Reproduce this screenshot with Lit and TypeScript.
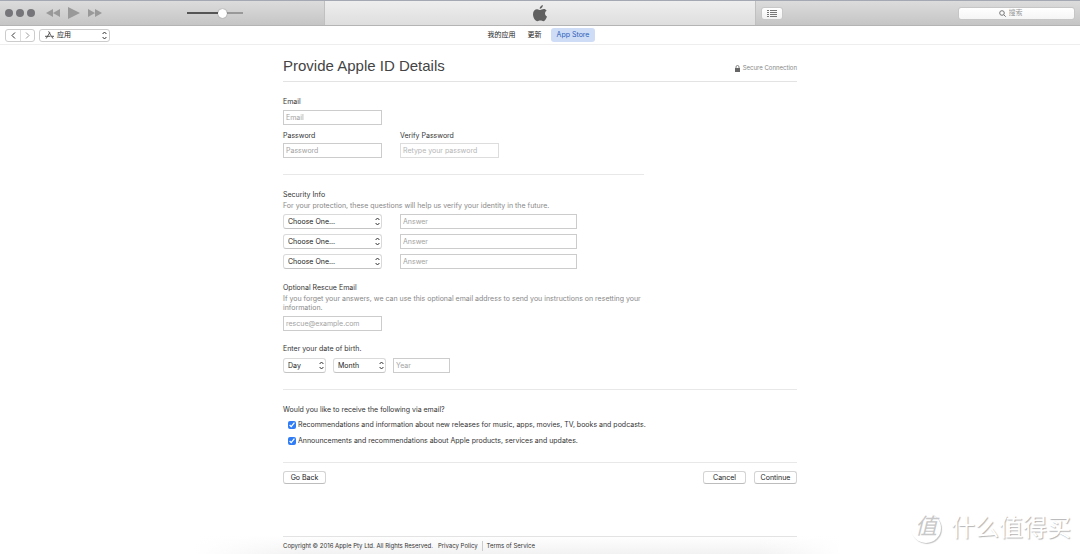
import { LitElement, html, css } from "lit";
import { customElement, property } from "lit/decorators.js";

@customElement("pop-select")
class PopSelect extends LitElement {
  @property() label = "";
  @property() text = "";

  static styles = css`
    :host { display: block; }
    .wrap { display: grid; align-items: center; }
    .control, .arrows { grid-area: 1 / 1; }
    .control {
      appearance: none; box-sizing: border-box; width: 100%; height: 15px; margin: 0;
      padding: 0 12px 0 4px; border: 1px solid #dadada; border-bottom-color: #c4c4c4; border-radius: 3px;
      background: #fff; color: #222; font: 7px/11px Inter, "Liberation Sans", sans-serif;
    }
    .arrows { justify-self: end; margin-right: 2px; width: 5px; height: 9px; pointer-events: none; }
  `;

  render() {
    return html`<div class="wrap">
      <select class="control" aria-label=${this.label}><option>${this.text}</option></select>
      <svg class="arrows" viewBox="0 0 5 9" fill="none" stroke="#333" stroke-width="1">
        <path d="M.6 3 2.5 1 4.4 3M.6 6 2.5 8 4.4 6" />
      </svg>
    </div>`;
  }
}

@customElement("app-root")
class AppRoot extends LitElement {
  static styles = css`
    :host {
      display: flex; flex-direction: column; min-height: 100vh; background: #fff; color: #333;
      font: 7px/10px Inter, "Liberation Sans", "Noto Sans CJK SC", sans-serif;
    }
    * { box-sizing: border-box; }
    button, input { font: inherit; margin: 0; }
    h1, h2, p { margin: 0; font-size: inherit; font-weight: normal; }
    svg { display: block; }

    .toolbar {
      display: grid; grid-template-columns: 1fr 40% 1fr; height: 26px;
      border-top: 1px solid #a3a8b3; border-bottom: 1px solid #b4b4b4;
      background: linear-gradient(#dcdcdc, #c5c5c5);
    }
    .left, .right { display: flex; align-items: center; }
    .left { padding-left: 5px; }
    .dots { display: flex; gap: 3px; }
    .dot { width: 8px; height: 8px; border-radius: 50%; background: #75757a; }
    .transport { display: flex; align-items: center; gap: 8px; margin-left: 11px; }
    .plain { padding: 0; border: 0; background: none; }
    .volume {
      appearance: none; width: 56px; height: 10px; margin-left: 85px;
      background: linear-gradient(90deg, #555 64%, #999 64%) center / 100% 2px no-repeat;
    }
    .volume::-webkit-slider-thumb {
      appearance: none; width: 9px; height: 9px; border-radius: 50%;
      background: #fff; box-shadow: 0 0 1px #555;
    }
    .display {
      display: grid; place-items: center; background: linear-gradient(#eeeeee, #dedede);
      border: solid #c0c0c0; border-width: 0 1px;
    }
    .right { justify-content: space-between; padding: 0 5px 0 5px; }
    .list {
      display: grid; place-items: center; width: 22px; height: 13px; padding: 0;
      border: 1px solid #c8c8c8; border-radius: 3px; background: linear-gradient(#fff, #f1f1f1);
    }
    .search {
      display: flex; align-items: center; justify-content: center; gap: 3px; width: 117px; height: 13px;
      border: 1px solid #c6c6c6; border-radius: 3px; background: linear-gradient(#fff, #f5f5f5);
    }
    .query { width: 26px; padding: 0; border: 0; outline: 0; background: none; }
    .query::placeholder { color: #999; opacity: 1; }

    .nav {
      display: grid; grid-template-columns: 1fr auto 1fr; align-items: center;
      height: 19px; padding: 0 5px; border-bottom: 1px solid #eee;
    }
    .crumbs { display: flex; gap: 4px; }
    .pair { display: flex; border: 1px solid #ccc; border-radius: 3px; height: 13px; }
    .step { display: grid; place-items: center; width: 14px; padding: 0; border: 0; background: none; }
    .step + .step { border-left: 1px solid #ddd; }
    .library {
      display: flex; align-items: center; gap: 3px; width: 71px; height: 13px; padding: 0 2px 0 5px;
      border: 1px solid #ccc; border-radius: 3px; background: #fff; color: #222;
    }
    .grow { margin-left: auto; }
    .tabs { display: flex; align-items: center; gap: 6px; }
    .tab { padding: 2px 3px; border-radius: 3px; color: #222; text-decoration: none; }
    .current { padding: 2px 6px; background: #cfdcf6; color: #2a5fb8; }

    .page { width: 100%; max-width: 514px; margin: 0 auto; }
    .head {
      display: flex; justify-content: space-between; align-items: center;
      padding: 11px 0 5px; border-bottom: 1px solid #e3e3e3;
    }
    .title { font-family: "Liberation Sans", sans-serif; font-size: 15px; line-height: 20px; color: #444; }
    .secure { display: flex; align-items: center; gap: 3px; margin-top: 4px; color: #888; font-size: 6px; }
    .narrow { max-width: 361px; }
    .section { padding: 15px 0 16px; border-bottom: 1px solid #e8e8e8; }
    .flat { padding-bottom: 0; border: 0; }
    .near { padding-top: 13px; }
    .label { display: block; }
    .hint { margin-top: 1px; color: #888; line-height: 9px; }
    .field {
      display: block; width: 100%; height: 15px; padding: 0 2px; border: 1px solid #ccc;
      border-radius: 0; background: #fff; color: #333;
    }
    .field::placeholder { color: #a2a2a2; opacity: 1; }
    .faint { border-color: #ddd; }
    .faint::placeholder { color: #b5b5b5; }
    .cols { display: grid; grid-template-columns: 99px 99px; gap: 18px; }
    .stack { display: grid; gap: 2px; }
    .email { width: 99px; gap: 3px; margin-bottom: 6px; }
    .answers { display: grid; grid-template-columns: 99px 177px; gap: 5px 18px; margin-top: 4px; }
    .block { margin-top: 14px; }
    .rescue { width: 99px; margin-top: 4px; }
    .birth { display: grid; grid-template-columns: 43px 53px 57px; gap: 7px; margin-top: 4px; }
    .checks { display: grid; gap: 6px; margin-top: 5px; padding-left: 5px; }
    .check { display: flex; align-items: center; gap: 2px; }
    .box { width: 8px; height: 8px; accent-color: #2f7cf6; }
    .actions { display: flex; gap: 8px; padding-top: 8px; }
    .push {
      width: 43px; height: 13px; padding: 0; border: 1px solid #d4d4d4; border-bottom-color: #bdbdbd;
      border-radius: 3px; background: #fff; color: #222; line-height: 10px;
    }

    .footer {
      margin-top: auto;
      background: linear-gradient(90deg, #fff 18%, transparent 28%, transparent 70%, #fff 78%),
        linear-gradient(#fff, #f2f2f2);
    }
    .legal { display: flex; padding: 4px 0 3px; border-top: 1px solid #e3e3e3; font-size: 6px; }
    .link { color: #333; text-decoration: none; }
    .privacy { margin-left: 5px; padding-right: 4px; border-right: 1px solid #ccc; }
    .terms { padding-left: 4px; }

    .mark {
      position: absolute; right: 9px; bottom: 10px; display: flex; align-items: center; gap: 10px;
      color: #fff; font-size: 24px; line-height: 32px; text-shadow: 1px 1px 1px #b4b4b4;
    }
    .seal {
      width: 30px; height: 30px; border-radius: 50%; line-height: 27px; text-align: center;
      color: #c8c8c8; text-shadow: none; font-style: italic; font-size: 22px;
      box-shadow: 1px 1px 1px #c4c4c4;
    }
  `;

  render() {
    return html`
      <header class="toolbar">
        <div class="left">
          <div class="dots"><span class="dot"></span><span class="dot"></span><span class="dot"></span></div>
          <div class="transport">
            <button class="plain" aria-label="Previous"><svg width="14" height="8" fill="#999"><path d="M7 0v8L0 4zM14 0v8L7 4z" /></svg></button>
            <button class="plain" aria-label="Play"><svg width="12" height="12" fill="#999"><path d="M0 0 12 6 0 12z" /></svg></button>
            <button class="plain" aria-label="Next"><svg width="14" height="8" fill="#999"><path d="M0 0v8l7-4zM7 0v8l7-4z" /></svg></button>
          </div>
          <input class="volume" type="range" aria-label="Volume" value="65" />
        </div>
        <div class="display">
          <svg width="14" height="17" viewBox="0 0 14 17" fill="#606060">
            <path d="M9.9 0c.1 1.800-1.300 3.700-3.200 3.800C6.500 2.200 8.100.3 9.900 0zM13.600 5.800c-2.300 1.400-2 4.700.4 5.700-.6 1.900-2 4.700-3.600 4.700-1.200 0-1.600-.7-3-.7s-1.900.7-3 .7C2.300 16.200 0 12.500 0 9.200 0 6 2 4.200 4.100 4.200c1.300 0 2.300.8 3.100.8.800 0 2-.9 3.600-.9 1.200 0 2.200.6 2.800 1.700z" />
          </svg>
        </div>
        <div class="right">
          <button class="list" aria-label="List"><svg width="10" height="7" fill="#777"><path d="M0 0h2v1H0zM3 0h7v1H3zM0 2h2v1H0zM3 2h7v1H3zM0 4h2v1H0zM3 4h7v1H3zM0 6h2v1H0zM3 6h7v1H3z" /></svg></button>
          <label class="search">
            <svg width="7" height="7" viewBox="0 0 7 7" fill="none" stroke="#777"><circle cx="3" cy="3" r="2.300" /><path d="m4.700 4.700 2 2" /></svg>
            <input class="query" aria-label="搜索" placeholder="搜索" />
          </label>
        </div>
      </header>

      <nav class="nav">
        <div class="crumbs">
          <div class="pair">
            <button class="step" aria-label="Back"><svg width="5" height="7" fill="none" stroke="#333"><path d="M4 .5 1 3.500l3 3" /></svg></button>
            <button class="step" aria-label="Forward"><svg width="5" height="7" fill="none" stroke="#999"><path d="m1 .5 3 3-3 3" /></svg></button>
          </div>
          <button class="library">
            <svg width="9" height="8" viewBox="0 0 9 8" fill="none" stroke="#444" stroke-width=".9"><path d="M3.600.3C4.800 2.500 6.200 5.200 8 7.600M4.800 1.500 1.200 7.500M0 5.300h5.500M7 5.300h2" /></svg>
            <span>应用</span>
            <svg class="grow" width="5" height="9" fill="none" stroke="#333"><path d="M.6 3 2.500 1 4.400 3M.6 6 2.500 8 4.400 6" /></svg>
          </button>
        </div>
        <div class="tabs">
          <a class="tab" href="#">我的应用</a>
          <a class="tab" href="#">更新</a>
          <a class="tab current" href="#">App Store</a>
        </div>
      </nav>

      <main class="page">
        <div class="head">
          <h1 class="title">Provide Apple ID Details</h1>
          <span class="secure">
            <svg width="5" height="7"><path d="M0 3h5v4H0z" fill="#666" /><path d="M1 3.500V2a1.500 1.500 0 0 1 3 0v1.500" fill="none" stroke="#777" stroke-width=".9" /></svg>
            Secure Connection
          </span>
        </div>

        <div class="section narrow">
          <div class="stack email">
            <label class="label" for="email">Email</label>
            <input class="field" id="email" type="email" placeholder="Email" />
          </div>
          <div class="cols">
            <div class="stack">
              <label class="label" for="password">Password</label>
              <input class="field" id="password" type="password" placeholder="Password" />
            </div>
            <div class="stack">
              <label class="label" for="verify">Verify Password</label>
              <input class="field faint" id="verify" type="password" placeholder="Retype your password" />
            </div>
          </div>
        </div>

        <div class="section flat narrow">
          <h2 class="label">Security Info</h2>
          <p class="hint">For your protection, these questions will help us verify your identity in the future.</p>
          <div class="answers">
            ${[1, 2, 3].map((n) => html`
              <pop-select label="Security question ${n}" text="Choose One..."></pop-select>
              <input class="field" aria-label="Answer ${n}" placeholder="Answer" />`)}
          </div>
          <div class="block">
            <label class="label" for="rescue">Optional Rescue Email</label>
            <p class="hint">If you forget your answers, we can use this optional email address to send you instructions on resetting your information.</p>
            <input class="field rescue" id="rescue" type="email" placeholder="rescue@example.com" />
          </div>
        </div>

        <div class="section near">
          <p>Enter your date of birth.</p>
          <div class="birth">
            <pop-select label="Day" text="Day"></pop-select>
            <pop-select label="Month" text="Month"></pop-select>
            <input class="field" aria-label="Year" placeholder="Year" />
          </div>
        </div>

        <div class="section">
          <p>Would you like to receive the following via email?</p>
          <div class="checks">
            <label class="check"><input class="box" type="checkbox" checked />Recommendations and information about new releases for music, apps, movies, TV, books and podcasts.</label>
            <label class="check"><input class="box" type="checkbox" checked />Announcements and recommendations about Apple products, services and updates.</label>
          </div>
        </div>

        <div class="actions">
          <button class="push">Go Back</button>
          <button class="push grow">Cancel</button>
          <button class="push">Continue</button>
        </div>
      </main>

      <footer class="footer">
        <div class="page legal">
          <span>Copyright © 2016 Apple Pty Ltd. All Rights Reserved.</span>
          <a class="link privacy" href="#">Privacy Policy</a>
          <a class="link terms" href="#">Terms of Service</a>
        </div>
      </footer>

      <div class="mark"><span class="seal">值</span><span>什么值得买</span></div>
    `;
  }
}
